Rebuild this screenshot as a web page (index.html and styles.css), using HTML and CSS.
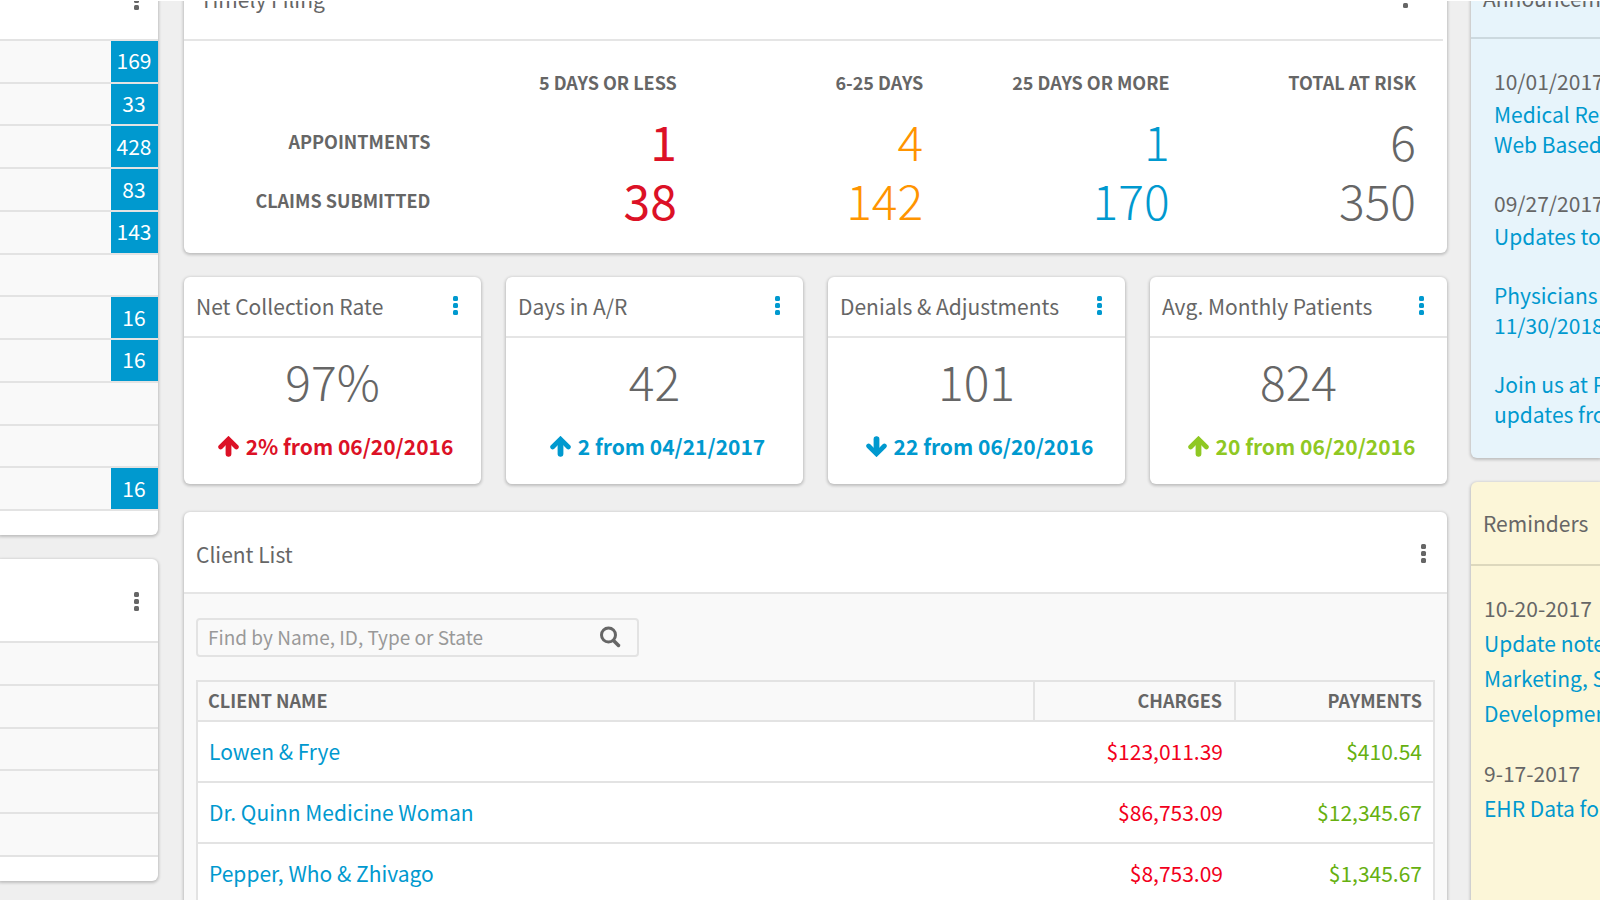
FILE: index.html
```html
<!DOCTYPE html>
<html lang="en">
<head>
<meta charset="utf-8">
<title>Dashboard</title>
<link rel="stylesheet" href="styles.css">
</head>
<body>
<svg class="sprite" aria-hidden="true">
  <symbol id="dots" viewBox="0 0 6 20"><rect x="0" y="0" width="5" height="5" rx="1.5"/><rect x="0" y="7" width="5" height="5" rx="1.5"/><rect x="0" y="14" width="5" height="5" rx="1.5"/></symbol>
  <symbol id="arrow" viewBox="0 0 20 20"><path d="M10 17V5M2.500 10.500L10 3L17.500 10.500" fill="none" stroke="currentColor" stroke-width="4.500" stroke-linecap="round" stroke-linejoin="miter"/><path d="M10 17V5" fill="none" stroke="currentColor" stroke-width="5.500" stroke-linecap="round"/></symbol>
  <symbol id="search" viewBox="0 0 22 22"><circle cx="9.500" cy="9" r="7" fill="none" stroke="currentColor" stroke-width="3"/><path d="M14.500 14.500L19.500 19.500" stroke="currentColor" stroke-width="3.500" stroke-linecap="round"/></symbol>
</svg>
<div class="page">
  <aside class="column column-left">
    <section class="card card-cut">
      <header class="card-head card-head-short"><button class="menu" aria-label="Options"><svg><use href="#dots"/></svg></button></header>
      <ul class="counts counts-long">
        <li><span class="count">169</span></li>
        <li><span class="count">33</span></li>
        <li><span class="count">428</span></li>
        <li><span class="count">83</span></li>
        <li><span class="count">143</span></li>
        <li></li>
        <li><span class="count">16</span></li>
        <li><span class="count">16</span></li>
        <li></li>
        <li></li>
        <li><span class="count">16</span></li>
      </ul>
    </section>
    <section class="card card-cut">
      <header class="card-head"><button class="menu" aria-label="Options"><svg><use href="#dots"/></svg></button></header>
      <ul class="counts counts-short"><li></li><li></li><li></li><li></li><li></li></ul>
    </section>
  </aside>

  <main class="column column-main">
    <section class="card filing">
      <header class="card-head"><h2>Timely Filing</h2><button class="menu" aria-label="Timely Filing options"><svg><use href="#dots"/></svg></button></header>
      <table class="risk">
        <thead><tr><td></td><th scope="col">5 DAYS OR LESS</th><th scope="col">6-25 DAYS</th><th scope="col">25 DAYS OR MORE</th><th scope="col">TOTAL AT RISK</th></tr></thead>
        <tbody>
          <tr><th scope="row">APPOINTMENTS</th><td class="urgent">1</td><td class="soon">4</td><td class="later">1</td><td>6</td></tr>
          <tr><th scope="row">CLAIMS SUBMITTED</th><td class="urgent">38</td><td class="soon">142</td><td class="later">170</td><td>350</td></tr>
        </tbody>
      </table>
    </section>

    <div class="stats">
      <section class="card stat">
        <header class="card-head"><h2>Net Collection Rate</h2><button class="menu" aria-label="Net Collection Rate options"><svg><use href="#dots"/></svg></button></header>
        <p class="figure">97%</p>
        <p class="delta bad"><svg><use href="#arrow"/></svg>2% from 06/20/2016</p>
      </section>
      <section class="card stat">
        <header class="card-head"><h2>Days in A/R</h2><button class="menu" aria-label="Days in A/R options"><svg><use href="#dots"/></svg></button></header>
        <p class="figure">42</p>
        <p class="delta"><svg><use href="#arrow"/></svg>2 from 04/21/2017</p>
      </section>
      <section class="card stat">
        <header class="card-head"><h2>Denials &amp; Adjustments</h2><button class="menu" aria-label="Denials and Adjustments options"><svg><use href="#dots"/></svg></button></header>
        <p class="figure">101</p>
        <p class="delta"><svg class="down"><use href="#arrow"/></svg>22 from 06/20/2016</p>
      </section>
      <section class="card stat">
        <header class="card-head"><h2>Avg. Monthly Patients</h2><button class="menu" aria-label="Avg. Monthly Patients options"><svg><use href="#dots"/></svg></button></header>
        <p class="figure">824</p>
        <p class="delta good"><svg><use href="#arrow"/></svg>20 from 06/20/2016</p>
      </section>
    </div>

    <section class="card clients">
      <header class="card-head card-head-low"><h2>Client List</h2><button class="menu" aria-label="Client List options"><svg><use href="#dots"/></svg></button></header>
      <div class="clients-body">
        <form class="search">
          <input type="text" aria-label="Find a client" placeholder="Find by Name, ID, Type or State">
          <button type="button" aria-label="Search"><svg><use href="#search"/></svg></button>
        </form>
        <table class="client-table">
          <thead><tr><th scope="col">CLIENT NAME</th><th scope="col" class="charges">CHARGES</th><th scope="col" class="payments">PAYMENTS</th></tr></thead>
          <tbody>
            <tr><td><a href="#">Lowen &amp; Frye</a></td><td class="charges">$123,011.39</td><td class="payments">$410.54</td></tr>
            <tr><td><a href="#">Dr. Quinn Medicine Woman</a></td><td class="charges">$86,753.09</td><td class="payments">$12,345.67</td></tr>
            <tr><td><a href="#">Pepper, Who &amp; Zhivago</a></td><td class="charges">$8,753.09</td><td class="payments">$1,345.67</td></tr>
          </tbody>
        </table>
      </div>
    </section>
  </main>

  <aside class="column column-right">
    <section class="card news">
      <header class="card-head"><h2>Announcements</h2></header>
      <div class="entries">
        <div class="entry"><time>10/01/2017</time><a href="#">Medical Re<br>Web Based</a></div>
        <div class="entry"><time>09/27/2017</time><a href="#">Updates to</a></div>
        <div class="entry"><a href="#">Physicians<br>11/30/2018</a></div>
        <div class="entry"><a href="#">Join us at P<br>updates fro</a></div>
      </div>
    </section>
    <section class="card reminders">
      <header class="card-head"><h2>Reminders</h2></header>
      <div class="entries">
        <div class="entry"><time>10-20-2017</time><a href="#">Update note<br>Marketing, S<br>Developmen</a></div>
        <div class="entry"><time>9-17-2017</time><a href="#">EHR Data fo</a></div>
      </div>
    </section>
  </aside>
</div>
</body>
</html>
```
FILE: styles.css
```css
* { box-sizing: border-box; }
body {
  margin: 0;
  height: 100vh;
  overflow: hidden;
  border-top: 1px solid #fff;
  background: #efefef;
  color: #666;
  font: 400 21px/30px "Noto Sans CJK SC", "Noto Sans", sans-serif;
}
h2, p, ul { margin: 0; padding: 0; font-weight: 400; }
h2 { font-size: 21px; line-height: 30px; white-space: nowrap; }
a { color: #0099cf; text-decoration: none; }
button { border: 0; padding: 0; background: none; color: inherit; font: inherit; }
svg { display: block; fill: currentColor; }
.sprite { position: absolute; width: 0; height: 0; }

/* The dashboard is scrolled half a card header down. */
.page {
  display: grid;
  grid-template-columns: 158px minmax(0, 1fr) 129px;
  margin-top: -42px;
}
.column { display: flex; flex-direction: column; gap: 24px; min-width: 0; }
.column-main { padding: 0 24px 0 26px; }
.card { border-radius: 6px; background: #fff; box-shadow: 0 1px 3px 1px rgba(0, 0, 0, .2); }
.card-cut { border-radius: 0 6px 6px 0; padding-bottom: 24px; }
.card-head {
  display: flex;
  align-items: center;
  justify-content: space-between;
  height: 82px;
  padding: 0 20px 0 12px;
  border-bottom: 2px solid #e5e5e5;
}
.card-head-low { padding-top: 3px; }
.menu { width: 6px; height: 20px; }
.menu svg { width: 6px; height: 20px; }

.card-cut .card-head { justify-content: flex-end; padding: 3px 18px 0 12px; border-bottom: 0; }
.card-cut .card-head-short { height: 80px; }
.counts { display: grid; grid-auto-rows: 1fr; list-style: none; border-bottom: 2px solid #e3e3e3; background: #f9f9f9; }
.counts-long { height: 472px; }
.counts-short { height: 216px; }
.counts li { display: flex; justify-content: flex-end; border-top: 2px solid #e3e3e3; }
.count {
  display: flex;
  align-items: center;
  justify-content: center;
  width: 47px;
  padding: 0 1px 2px 0;
  background: #0099cf;
  color: #fff;
}

.filing .card-head { margin-right: 4px; padding: 0 34px 0 16px; }
.filing { padding-bottom: 24px; }
.risk { width: 100%; padding-right: 31px; table-layout: fixed; border-spacing: 0; text-align: right; }
.risk th, .risk td { padding: 0; }
.risk th { font-size: 18px; font-weight: 700; line-height: 30px; text-align: right; }
.risk thead th { height: 70px; padding-top: 12px; }
.risk tbody td { height: 59px; font-size: 48px; font-weight: 200; line-height: 59px; }
.risk td.urgent { color: #dc1126; font-weight: 400; }
.risk td.soon { color: #ff9400; font-weight: 300; }
.risk td.later { color: #0099cf; font-weight: 300; }

.stats { display: grid; grid-template-columns: repeat(4, minmax(0, 1fr)); gap: 25px; padding-bottom: 4px; }
.stat { padding-bottom: 23px; }
.stat .card-head { height: 61px; padding: 0 22px 2px 12px; }
.stat .menu { color: #0099cf; }
.figure { padding-top: 12px; font-size: 48px; font-weight: 200; line-height: 60px; text-align: center; }
.delta {
  display: flex;
  align-items: center;
  justify-content: center;
  gap: 7px;
  margin-top: 21px;
  padding-left: 6px;
  color: #0099cf;
  font-weight: 700;
  white-space: nowrap;
}
.delta svg { width: 21px; height: 21px; }
.delta .down { transform: rotate(180deg); }
.bad { color: #dc1126; }
.good { color: #8fc823; }

.clients { overflow: clip; overflow-clip-margin: 4px; }
.clients-body { padding: 24px 12px; background: #f9f9f9; }
.search {
  display: flex;
  align-items: center;
  width: 443px;
  height: 39px;
  padding: 0 16px 2px 10px;
  border: 2px solid #e3e3e3;
  border-radius: 4px;
}
.search input { flex: 1; min-width: 0; border: 0; padding: 0; outline: 0; background: none; color: #666; font: 400 19px/30px "Noto Sans CJK SC", "Noto Sans", sans-serif; }
.search input::placeholder { color: #999; opacity: 1; }
.search svg { width: 22px; height: 22px; }
.client-table { width: 100%; margin-top: 23px; border: 2px solid #e3e3e3; border-collapse: collapse; }
.client-table th { height: 40px; padding: 0 11px 2px 10px; border: 2px solid #e3e3e3; font-size: 18px; font-weight: 700; line-height: 30px; text-align: left; }
.client-table td { height: 61px; padding: 0 11px 2px; border-bottom: 2px solid #e3e3e3; background: #fff; }
.client-table .charges { width: 201px; padding-right: 12px; text-align: right; }
.client-table .payments { width: 199px; text-align: right; }
td.charges { color: #f2001c; }
td.payments { color: #66b010; }

.column-right .card { border-radius: 6px 0 0 6px; overflow: clip; overflow-clip-margin: 4px; white-space: nowrap; }
.news { height: 499px; }
.column-right .news { background: #e7f4fb; }
.column-right .reminders { background: #fcf6d8; }
.news .card-head { height: 80px; border-color: #ccd9df; }
.reminders .card-head { height: 84px; border-color: #ddd8bd; }
.entries { display: flex; flex-direction: column; gap: 29px; padding: 27px 0 0 23px; }
.entry { display: flex; flex-direction: column; }
.news time { padding-bottom: 3px; }
.reminders .entries { gap: 25px; padding: 25px 0 120px 13px; line-height: 35px; }
```
